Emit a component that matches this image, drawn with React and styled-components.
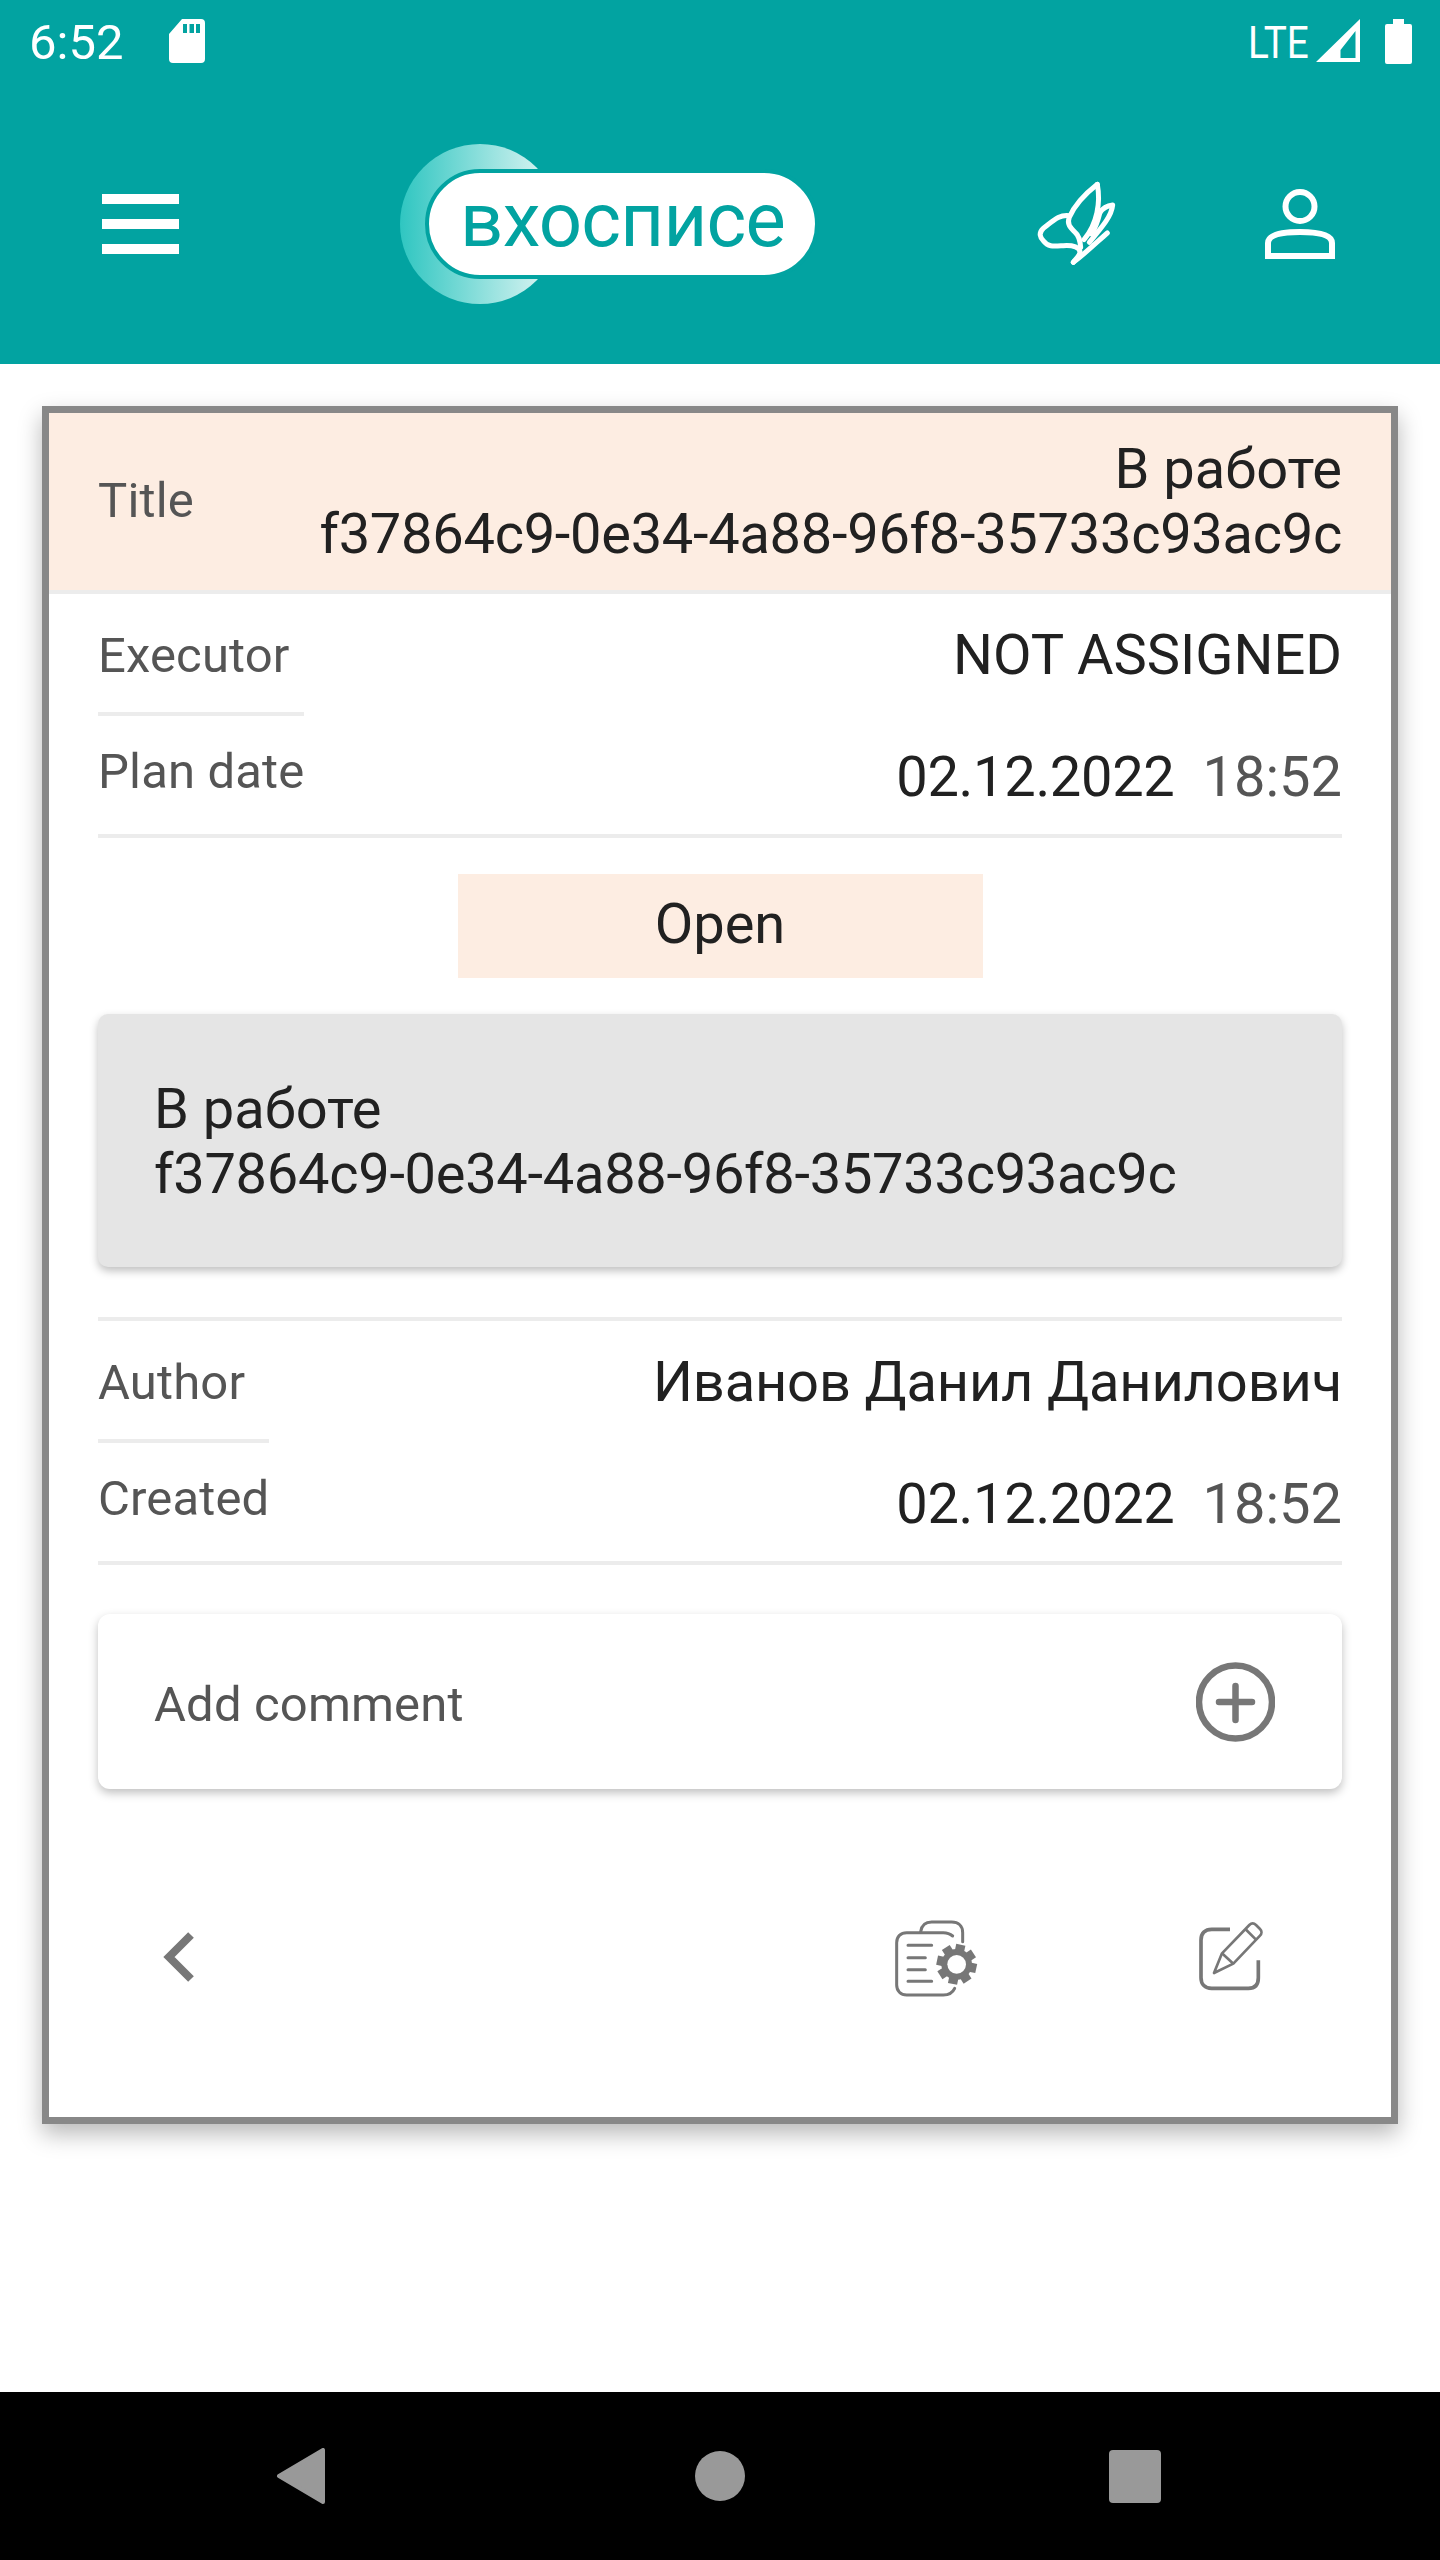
import React from 'react';
import styled, { createGlobalStyle } from 'styled-components';

const GlobalStyle = createGlobalStyle`
  html, body {
    margin: 0;
    padding: 0;
    background: #fff;
    font-family: Roboto, "Noto Sans", sans-serif;
  }
  * { box-sizing: border-box; }
`;

const Page = styled.div`
  display: flex;
  flex-direction: column;
  height: 2560px;
  background: #fff;
`;

const Header = styled.header`
  height: 364px;
  background: #02a3a1;
  color: #fff;
`;

const StatusBar = styled.div`
  display: flex;
  justify-content: space-between;
  height: 84px;
  padding: 19px 28px 0 29px;
`;

const StatusGroup = styled.div`
  display: flex;
  align-items: flex-start;
`;

const Clock = styled.span`
  font-size: 49px;
  line-height: 52px;
  margin-top: -2px;
  width: 140px;
`;

const Lte = styled.span`
  display: block;
  width: 65px;
  margin-left: -3px;
  margin-right: 3px;
  font-size: 44px;
  line-height: 48px;
  transform: scaleX(0.88);
  transform-origin: left top;
`;

const Toolbar = styled.div`
  display: flex;
  align-items: center;
  height: 280px;
  padding-left: 102px;
`;

const Menu = styled.div`
  display: flex;
  flex-direction: column;
  gap: 15px;
  width: 77px;
  margin-right: 221px;
`;

const MenuBar = styled.span`
  display: block;
  height: 10px;
  background: #fff;
`;

const Logo = styled.div`
  position: relative;
  display: flex;
  align-items: center;
  width: 419px;
  height: 160px;
  margin-right: 201px;
  padding-left: 25px;

  &::before {
    content: '';
    position: absolute;
    left: 0;
    top: 0;
    width: 160px;
    height: 160px;
    border-radius: 50%;
    background: linear-gradient(90deg, #2fc6c1 0%, #d6f3f1 90%);
  }
`;

const LogoPill = styled.div`
  position: relative;
  display: flex;
  align-items: center;
  width: 394px;
  height: 110px;
  padding: 0 0 8px 31px;
  border: 4px solid #02a3a1;
  border-radius: 55px;
  background: #fff;
  color: #02a3a1;
  font-size: 76px;
  letter-spacing: -0.8px;
  line-height: 1;
`;

const ToolbarIcon = styled.svg`
  display: block;
  flex: none;
`;

const Main = styled.main`
  flex: 1;
  padding: 42px 42px 0;
`;

const Card = styled.section`
  height: 1718px;
  border: 7px solid #888;
  background: #fff;
  box-shadow: 0 10px 22px rgba(0, 0, 0, 0.28);
`;

const TitleRow = styled.div`
  display: flex;
  justify-content: space-between;
  align-items: center;
  height: 181px;
  padding: 0 49px;
  background: #fdede2;
  border-bottom: 4px solid #ececec;
`;

const Label = styled.span`
  font-size: 49px;
  line-height: 57px;
  letter-spacing: 0.15px;
  color: #555;
`;

const TitleLabel = styled(Label)`
  margin-top: -3px;
`;

const TitleValue = styled.div`
  font-size: 56px;
  line-height: 65px;
  color: #212121;
  text-align: right;
`;

const TaskId = styled.span`
  letter-spacing: -0.28px;
`;

const Body = styled.div`
  padding: 0 49px;
`;

const InfoGrid = styled.div`
  display: grid;
  grid-template-columns: max-content 1fr;
`;

const GridLabel = styled(Label)`
  padding: ${(p) => (p.$first ? '33px 0 28px' : '27px 0 34px')};
  border-bottom: ${(p) => (p.$first ? '4px solid #ececec' : 'none')};
`;

const GridValue = styled.div`
  padding-top: 29px;
  font-size: 56px;
  line-height: 65px;
  color: #212121;
  text-align: right;
`;

const AuthorName = styled.span`
  letter-spacing: -0.15px;
`;

const DateText = styled.span`
  letter-spacing: -0.3px;
`;

const Time = styled.span`
  margin-left: 28px;
  color: #555;
`;

const Divider = styled.div`
  height: 4px;
  background: #ececec;
`;

const StatusBadge = styled.div`
  display: flex;
  align-items: center;
  justify-content: center;
  width: 525px;
  height: 104px;
  margin: 36px auto 36px;
  padding-bottom: 5px;
  background: #fdede2;
  font-size: 56px;
  color: #212121;
`;

const Description = styled.div`
  display: flex;
  align-items: center;
  height: 253px;
  margin-bottom: 50px;
  padding: 2px 56px 0;
  border-radius: 10px;
  background: #e5e5e5;
  box-shadow: 0 4px 9px rgba(0, 0, 0, 0.25);
  font-size: 56px;
  line-height: 65px;
  color: #212121;
`;

const CommentCard = styled.div`
  display: flex;
  align-items: center;
  justify-content: space-between;
  height: 175px;
  margin-top: 49px;
  padding: 0 67px 0 56px;
  border-radius: 12px;
  background: #fff;
  box-shadow: 0 4px 10px rgba(0, 0, 0, 0.25);
`;

const CommentLabel = styled(Label)`
  margin-top: 5px;
`;

const Actions = styled.div`
  display: flex;
  align-items: center;
  margin-top: 112px;
  padding: 0 62px 0 51px;
`;

const ActionsRight = styled.div`
  display: flex;
  align-items: center;
  gap: 190px;
  margin-left: auto;
`;

const NavBar = styled.nav`
  display: flex;
  align-items: center;
  height: 168px;
  padding-left: 276px;
  background: #000;
`;

const NavCircle = styled.span`
  width: 50px;
  height: 50px;
  margin: 0 364px 0 370px;
  border-radius: 50%;
  background: #999;
`;

const NavSquare = styled.span`
  width: 52px;
  height: 53px;
  border-radius: 4px;
  background: #999;
`;

const SdIcon = () => (
  <svg width="36" height="44" viewBox="0 0 36 44">
    <path
      fill="#fff"
      fillRule="evenodd"
      d="M13 0H32a4 4 0 0 1 4 4V40a4 4 0 0 1-4 4H4a4 4 0 0 1-4-4V15Z M14 5V14H18V5Z M20.5 5V14H25V5Z M27 5V14H31V5Z"
    />
  </svg>
);

const SignalIcon = () => (
  <svg width="44" height="43" viewBox="0 0 44 43">
    <path fill="#fff" fillRule="evenodd" d="M44 0V43H0Z M39.5 12 24.5 31V39H39.5Z" />
  </svg>
);

const BatteryIcon = () => (
  <svg width="27" height="45" viewBox="0 0 27 45" style={{ marginLeft: 25 }}>
    <path fill="#fff" d="M8 0H19V5H25a2 2 0 0 1 2 2V43a2 2 0 0 1-2 2H2a2 2 0 0 1-2-2V7a2 2 0 0 1 2-2H8Z" />
  </svg>
);

const LeafIcon = () => (
  <ToolbarIcon width="110" height="110" viewBox="0 0 330 330" style={{ marginRight: 135 }}>
    <g fill="none" stroke="#fff" strokeWidth="15" strokeLinecap="round" strokeLinejoin="round">
      <path d="M232 46C195 75 165 105 148 145C140 165 150 175 165 190C178 200 180 215 182 235" />
      <path d="M232 46C242 100 232 165 192 212" />
      <path d="M148 140C120 135 100 155 70 178C55 192 60 205 70 215C85 235 100 232 130 230C160 228 180 235 180 250C178 262 165 272 160 280" />
      <path d="M240 130C250 115 265 110 278 108C275 140 250 170 208 220" />
      <path d="M240 130C235 150 230 170 215 195" />
      <path d="M160 280C200 250 235 215 262 192" />
    </g>
  </ToolbarIcon>
);

const PersonIcon = () => (
  <ToolbarIcon width="70" height="70" viewBox="0 0 70 70">
    <g fill="none" stroke="#fff" strokeWidth="6">
      <circle cx="35" cy="17.5" r="14.5" />
      <path d="M3 67V54C3 46 16 43 35 43C54 43 67 46 67 54V67Z" />
    </g>
  </ToolbarIcon>
);

const PlusIcon = () => (
  <svg width="79" height="80" viewBox="0 0 79 80">
    <g fill="none" stroke="#777" strokeLinecap="round" strokeWidth="6.5">
      <circle cx="39.5" cy="40" r="36.5" />
      <path d="M39.5 24V58M23 40H56" />
    </g>
  </svg>
);

const BackIcon = () => (
  <svg width="60" height="110" viewBox="0 0 60 110">
    <path d="M42 34 20 56 42 78" fill="none" stroke="#777" strokeWidth="8" />
  </svg>
);

const gearTeeth = [0, 45, 90, 135, 180, 225, 270, 315];

const DocSettingsIcon = () => (
  <svg width="120" height="110" viewBox="0 0 360 330">
    <g fill="none" stroke="#777" strokeWidth="9" strokeLinecap="round">
      <path d="M218 105C210 98 200 95 190 95H80C62 95 50 107 50 125V252C50 270 62 282 80 282H190C205 282 218 275 224 262" />
      <path d="M122 92C125 72 135 63 155 63H215C235 63 248 75 248 95V122" />
      <path d="M84 133H155M84 170H136M84 206H136M84 241H155" />
    </g>
    <g fill="#777">
      {gearTeeth.map((a) => (
        <rect key={a} x="216" y="130" width="28" height="24" transform={`rotate(${a + 12} 230 190)`} />
      ))}
      <circle cx="230" cy="190" r="46" />
    </g>
    <circle cx="230" cy="190" r="28" fill="#fff" />
  </svg>
);

const EditIcon = () => (
  <svg width="90" height="90" viewBox="0 0 270 270">
    <g fill="none" stroke="#777" strokeLinejoin="round">
      <path d="M120 55H65C45 55 33 67 33 87V200C33 220 45 232 65 232H175C195 232 205 220 205 200V148" strokeWidth="11" />
      <path d="M72 186 96 127 178 42C184 36 192 36 198 42L210 54C216 60 216 68 210 74L130 158Z" strokeWidth="8" />
      <path d="M96 127 130 158M166 54 198 86" strokeWidth="8" />
    </g>
  </svg>
);

const NavBack = () => (
  <svg width="49" height="56" viewBox="0 0 49 56" style={{ display: 'block' }}>
    <path d="M47 2V54L3 28Z" fill="#999" stroke="#999" strokeWidth="4" strokeLinejoin="round" />
  </svg>
);

const TASK_ID = 'f37864c9-0e34-4a88-96f8-35733c93ac9c';

const InfoBlock = ({ topLabel, topValue, dateLabel }) => (
  <InfoGrid>
    <GridLabel $first>{topLabel}</GridLabel>
    <GridValue>{topValue}</GridValue>
    <GridLabel>{dateLabel}</GridLabel>
    <GridValue>
      <DateText>02.12.2022</DateText>
      <Time>18:52</Time>
    </GridValue>
  </InfoGrid>
);

export default function App() {
  return (
    <Page>
      <GlobalStyle />
      <Header>
        <StatusBar>
          <StatusGroup>
            <Clock>6:52</Clock>
            <SdIcon />
          </StatusGroup>
          <StatusGroup>
            <Lte>LTE</Lte>
            <SignalIcon />
            <BatteryIcon />
          </StatusGroup>
        </StatusBar>
        <Toolbar>
          <Menu>
            <MenuBar />
            <MenuBar />
            <MenuBar />
          </Menu>
          <Logo>
            <LogoPill>вхосписе</LogoPill>
          </Logo>
          <LeafIcon />
          <PersonIcon />
        </Toolbar>
      </Header>
      <Main>
        <Card>
          <TitleRow>
            <TitleLabel>Title</TitleLabel>
            <TitleValue>
              В работе
              <br />
              <TaskId>{TASK_ID}</TaskId>
            </TitleValue>
          </TitleRow>
          <Body>
            <InfoBlock topLabel="Executor" topValue="NOT ASSIGNED" dateLabel="Plan date" />
            <Divider />
            <StatusBadge>Open</StatusBadge>
            <Description>
              <div>
                В работе
                <br />
                <TaskId>{TASK_ID}</TaskId>
              </div>
            </Description>
            <Divider />
            <InfoBlock
              topLabel="Author"
              topValue={<AuthorName>Иванов Данил Данилович</AuthorName>}
              dateLabel="Created"
            />
            <Divider />
            <CommentCard>
              <CommentLabel>Add comment</CommentLabel>
              <PlusIcon />
            </CommentCard>
            <Actions>
              <BackIcon />
              <ActionsRight>
                <DocSettingsIcon />
                <EditIcon />
              </ActionsRight>
            </Actions>
          </Body>
        </Card>
      </Main>
      <NavBar>
        <NavBack />
        <NavCircle />
        <NavSquare />
      </NavBar>
    </Page>
  );
}
